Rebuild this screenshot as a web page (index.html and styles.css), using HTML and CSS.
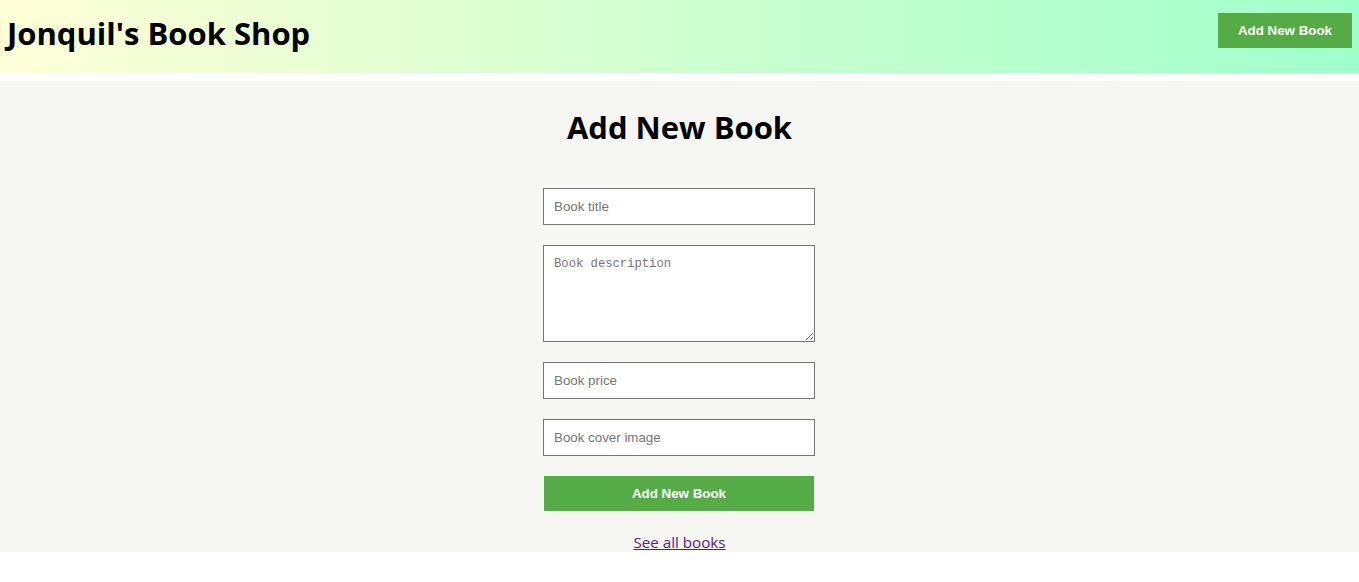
FILE: index.html
```html
<!DOCTYPE html>
<html lang="en">
<head>
<meta charset="utf-8">
<title>Jonquil's Book Shop</title>
<link rel="stylesheet" href="styles.css">
</head>
<body>
<header class="site-header">
  <h1 class="brand">Jonquil's Book Shop</h1>
  <button class="btn btn-header" type="button">Add New Book</button>
</header>
<main class="page">
  <h2 class="page-title">Add New Book</h2>
  <form class="book-form">
    <input class="field" type="text" placeholder="Book title">
    <textarea class="field field-area" placeholder="Book description"></textarea>
    <input class="field" type="text" placeholder="Book price">
    <input class="field" type="text" placeholder="Book cover image">
    <button class="btn btn-submit" type="button">Add New Book</button>
  </form>
  <a class="all-link" href="#">See all books</a>
</main>
</body>
</html>
```

FILE: styles.css
```css
html, body {
  margin: 0;
  padding: 0;
  background: #ffffff;
}

body {
  font-family: "Open Sans", "Noto Sans", sans-serif;
  color: #000;
}

.site-header {
  display: flex;
  justify-content: space-between;
  align-items: flex-start;
  height: 73px;
  padding: 0 7px 0 7px;
  margin-bottom: 8px;
  background: linear-gradient(to right, #ffffd6, #9fffcb);
  box-sizing: border-box;
}

.brand {
  margin: 13px 0 0 0;
  font-size: 31px;
  line-height: 40px;
  font-weight: 700;
}

.btn {
  border: none;
  background: #55ab45;
  color: #fff;
  font-family: "Liberation Sans", Arial, sans-serif;
  font-weight: 700;
  font-size: 13.33px;
  cursor: pointer;
}

.btn-header {
  margin-top: 13px;
  width: 134px;
  height: 35px;
  padding: 0;
}

.page {
  background: #f6f6f2;
  display: flex;
  flex-direction: column;
  align-items: center;
  padding-top: 26px;
  padding-right: 1px;
  height: 471px;
  box-sizing: border-box;
}

.page-title {
  margin: 0 0 0 1px;
  font-size: 31px;
  line-height: 40px;
  font-weight: 700;
}

.book-form {
  margin-top: 41px;
  display: flex;
  flex-direction: column;
  align-items: center;
  gap: 20px;
}

.field {
  width: 272px;
  height: 37px;
  box-sizing: border-box;
  border: 1px solid #767676;
  background: #fff;
  padding: 0 10px;
  font-family: "Liberation Sans", Arial, sans-serif;
  font-size: 13.33px;
  margin: 0;
  outline: none;
}

.field::placeholder {
  color: #757575;
}

.field-area {
  height: 97px;
  padding: 11px 10px;
  font-family: "Liberation Mono", "DejaVu Sans Mono", monospace;
  font-size: 12.2px;
  resize: vertical;
  display: block;
}

.btn-submit {
  width: 270px;
  height: 35px;
  padding: 0;
}

.all-link {
  margin-top: 20px;
  margin-left: 1px;
  font-size: 15.2px;
  line-height: 22px;
  color: #551a8b;
  text-decoration: underline;
}
```
